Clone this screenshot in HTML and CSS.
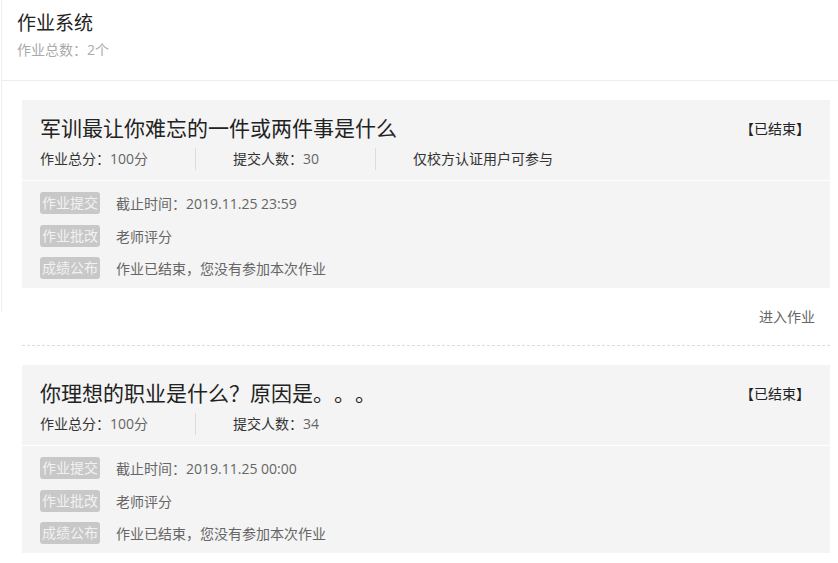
FILE: index.html
```html
<!DOCTYPE html>
<html lang="zh">
<head>
    <meta charset="UTF-8">
    <meta name="viewport" content="width=device-width, initial-scale=1.0">
    <title>作业系统</title>
    <link rel="stylesheet" href="styles.css">
</head>
<body>
    <div class="page">
        <div class="cabecalho">
            <h2>作业系统</h2>
            <div class="total">作业总数：2个</div>
        </div>
        <div class="lista">
            <div class="item">
                <div class="cartao">
                    <div class="titulo">
                        <h3>军训最让你难忘的一件或两件事是什么</h3>
                        <span class="estado">【已结束】</span>
                    </div>
                    <div class="stats">
                        <div class="stat">作业总分：<span>100分</span></div>
                        <div class="stat">提交人数：<span>30</span></div>
                        <div class="stat">仅校方认证用户可参与</div>
                    </div>
                    <div class="etapas">
                        <div class="etapa"><span class="tag">作业提交</span>截止时间：2019.11.25 23:59</div>
                        <div class="etapa"><span class="tag">作业批改</span>老师评分</div>
                        <div class="etapa"><span class="tag">成绩公布</span>作业已结束，您没有参加本次作业</div>
                    </div>
                </div>
                <div class="rodape"><a href="#">进入作业</a></div>
            </div>
            <div class="item">
                <div class="cartao">
                    <div class="titulo">
                        <h3>你理想的职业是什么？原因是。。。</h3>
                        <span class="estado">【已结束】</span>
                    </div>
                    <div class="stats">
                        <div class="stat">作业总分：<span>100分</span></div>
                        <div class="stat">提交人数：<span>34</span></div>
                    </div>
                    <div class="etapas">
                        <div class="etapa"><span class="tag">作业提交</span>截止时间：2019.11.25 00:00</div>
                        <div class="etapa"><span class="tag">作业批改</span>老师评分</div>
                        <div class="etapa"><span class="tag">成绩公布</span>作业已结束，您没有参加本次作业</div>
                    </div>
                </div>
            </div>
        </div>
    </div>
</body>
</html>
```

FILE: styles.css
```css
body { margin: 0; font-family: "Open Sans", "Noto Sans CJK SC", sans-serif; font-size: 14px; color: #333; background: #fff; text-spacing-trim: space-all; }
.page { position: relative; }
.page::before { content: ""; position: absolute; left: 1px; top: 0; width: 1px; height: 312px; background: #eee; }
.cabecalho { padding: 11px 16px 20px; margin-left: 1px; border-bottom: 1px solid #eee; }
.cabecalho h2 { margin: 0; font-size: 19px; font-weight: normal; line-height: 24px; color: #222; }
.total { margin-top: 5px; line-height: 20px; color: #aaa; }
.lista { padding: 19px 8px 0 22px; }
.cartao { background: #f4f4f4; }
.titulo { display: flex; justify-content: space-between; align-items: center; padding: 14px 20px 0 18px; height: 28px; }
.titulo h3 { margin: 0; font-size: 21px; font-weight: normal; line-height: 28px; color: #222; }
.estado { font-size: 14px; color: #222; }
.stats { display: flex; margin-top: 6px; padding: 0 18px 10px; border-bottom: 1px solid #fff; }
.stat { box-sizing: border-box; width: 180px; height: 22px; line-height: 22px; padding-left: 37px; border-left: 1px solid #ddd; color: #333; }
.stat:first-child { width: 155px; padding-left: 0; border-left: none; }
.stat:last-child { width: auto; }
.stat span { color: #666; }
.etapas { display: flex; flex-direction: column; gap: 10.5px; padding: 11px 18px 9px; }
.etapa { display: flex; align-items: center; height: 22px; color: #666; }
.tag { width: 60px; height: 22px; line-height: 22px; margin-right: 16px; text-align: center; background: #c8c8c8; color: #f2f2f2; border-radius: 3px; }
.rodape { text-align: right; padding: 19px 15px 18px 0; margin-bottom: 19px; border-bottom: 1px dashed #ddd; line-height: 20px; }
.rodape a { color: #666; text-decoration: none; }
```
